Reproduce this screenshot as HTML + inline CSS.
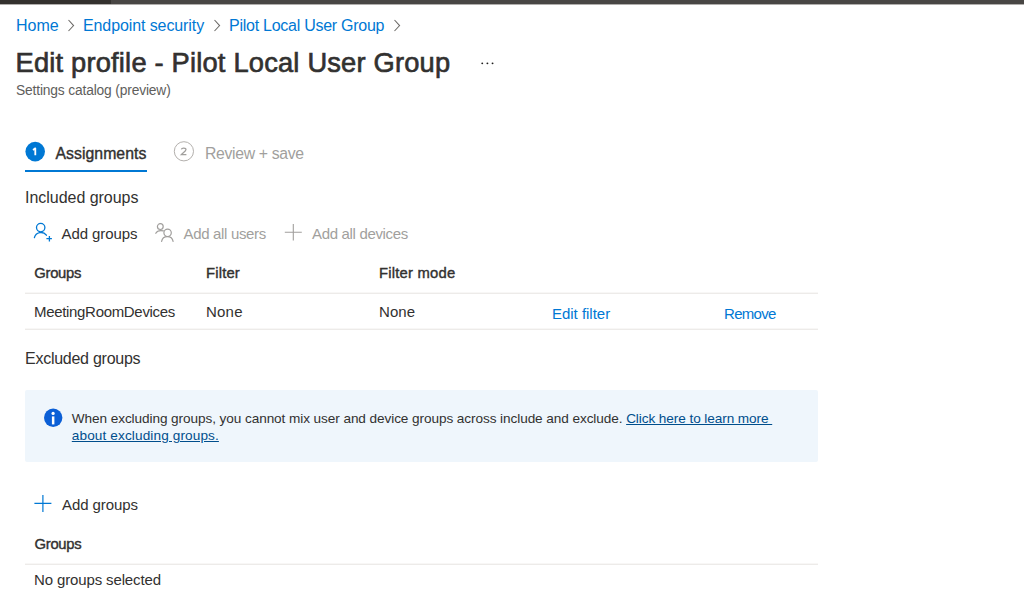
<!DOCTYPE html>
<html><head><meta charset="utf-8">
<style>
*{margin:0;padding:0;box-sizing:border-box}
html,body{width:1024px;height:596px;overflow:hidden;background:#fff}
body{position:relative;font-family:"Liberation Sans",sans-serif;color:#323130}
.a{position:absolute;white-space:nowrap}
.line{position:absolute;height:2px;border-top:1px solid #f8f7f6;background:#edebe9;left:25px;width:793px}
.il{color:#004e8c;text-decoration:underline;-webkit-text-stroke:0}
</style></head><body>
<div class="a" style="left:0;top:0;width:1024px;height:4px;background:#484644"></div>
<div class="a" style="left:0;top:0;width:111px;height:4px;background:#33312e"></div>
<div class="a" style="left:0;top:4px;width:1024px;height:1px;background:#b0aeac"></div>
<svg class="a" style="left:67px;top:18px" width="8" height="15" viewBox="0 0 8 15"><path d="M1.5 2 L6.6 7.6 L1.5 13" fill="none" stroke="#6b6966" stroke-width="1.05"/></svg>
<svg class="a" style="left:213px;top:18px" width="8" height="15" viewBox="0 0 8 15"><path d="M1.5 2 L6.6 7.6 L1.5 13" fill="none" stroke="#6b6966" stroke-width="1.05"/></svg>
<svg class="a" style="left:393px;top:18px" width="8" height="15" viewBox="0 0 8 15"><path d="M1.5 2 L6.6 7.6 L1.5 13" fill="none" stroke="#6b6966" stroke-width="1.05"/></svg>
<svg class="a" style="left:478px;top:60px" width="18" height="6" viewBox="0 0 18 6"><circle cx="4.25" cy="3.35" r="0.95" fill="#201f1e"/><circle cx="9.4" cy="3.35" r="0.95" fill="#201f1e"/><circle cx="14.55" cy="3.35" r="0.95" fill="#201f1e"/></svg>
<svg class="a" style="left:25px;top:141px" width="21" height="21" viewBox="0 0 21 21"><circle cx="10.2" cy="10.6" r="9.8" fill="#0078d4"/><path d="M10.3 14.3 V7.3 L8 8.9" fill="none" stroke="#fff" stroke-width="1.8" stroke-linejoin="round"/></svg>
<div class="a" style="left:25px;top:170px;width:122px;height:2px;background:#0078d4"></div>
<svg class="a" style="left:173px;top:141px" width="22" height="22" viewBox="0 0 22 22"><circle cx="10.9" cy="10.3" r="9.6" fill="none" stroke="#b3b0ad" stroke-width="1"/><path d="M8.4 8.4 C8.6 6.6 13 6.6 13 8.6 C13 10.2 10.5 11.5 8.3 13.6 H13.4" fill="none" stroke="#a19f9d" stroke-width="1.25"/></svg>
<svg class="a" style="left:30px;top:220px" width="24" height="24" viewBox="0 0 24 24"><circle cx="10.7" cy="7.6" r="4.2" fill="none" stroke="#0078d4" stroke-width="1.3"/><path d="M4.4 17.6 A6.8 6.8 0 0 1 16.4 15.2" fill="none" stroke="#0078d4" stroke-width="1.3" stroke-linecap="round"/><path d="M16.4 18.6 H21.9 M19.4 16.1 V21.6" fill="none" stroke="#0078d4" stroke-width="1.3"/></svg>
<svg class="a" style="left:150px;top:220px" width="26" height="24" viewBox="0 0 26 24"><circle cx="10.3" cy="6.6" r="2.9" fill="none" stroke="#a19f9d" stroke-width="1.2"/><path d="M5.8 13.3 Q7.6 9.8 13.4 10.9" fill="none" stroke="#a19f9d" stroke-width="1.2" stroke-linecap="round"/><circle cx="17.6" cy="12.8" r="3.7" fill="none" stroke="#a19f9d" stroke-width="1.2"/><path d="M11.6 21.4 A5.84 5.84 0 0 1 23.1 21.4" fill="none" stroke="#a19f9d" stroke-width="1.2" stroke-linecap="round"/></svg>
<svg class="a" style="left:284px;top:223px" width="19" height="19" viewBox="0 0 19 19"><path d="M0.8 9.2 H17.8 M9.3 1.1 V17.6" fill="none" stroke="#a19f9d" stroke-width="1.1"/></svg>
<div class="line" style="top:292px"></div>
<div class="line" style="top:328px"></div>
<div class="a" style="left:25px;top:390px;width:793px;height:72px;background:#eff6fc;border-radius:2px"></div>
<svg class="a" style="left:43px;top:408px" width="20" height="20" viewBox="0 0 20 20"><circle cx="10.2" cy="9.7" r="9.2" fill="#0b5fd6"/><circle cx="10.1" cy="5.4" r="1.6" fill="#fff"/><rect x="8.9" y="8.4" width="2.5" height="8" fill="#fff"/></svg>
<svg class="a" style="left:34px;top:495px" width="18" height="18" viewBox="0 0 18 18"><path d="M0.4 8.4 H17.4 M8.9 0 V17" fill="none" stroke="#0078d4" stroke-width="1.2"/></svg>
<div class="line" style="top:563px"></div>

<div class="a" style="left:16px;top:17.86px;font-size:16px;line-height:16px;color:#0078d4;">Home</div><div class="a" style="left:83px;top:17.86px;font-size:16px;line-height:16px;letter-spacing:-0.1px;color:#0078d4;">Endpoint security</div><div class="a" style="left:229px;top:17.86px;font-size:16px;line-height:16px;letter-spacing:-0.26px;color:#0078d4;">Pilot Local User Group</div><div class="a" style="left:15.5px;top:49.49px;font-size:27.3px;line-height:27.3px;letter-spacing:0.19px;-webkit-text-stroke:0.65px #323130;color:#323130;">Edit profile - Pilot Local User Group</div><div class="a" style="left:16px;top:84.47px;font-size:13.8px;line-height:13.8px;letter-spacing:-0.16px;color:#605e5c;">Settings catalog (preview)</div><div class="a" style="left:55.5px;top:145.78px;font-size:15.8px;line-height:15.8px;letter-spacing:0.04px;-webkit-text-stroke:0.4px #323130;color:#323130;">Assignments</div><div class="a" style="left:205px;top:145.78px;font-size:15.8px;line-height:15.8px;letter-spacing:-0.35px;color:#a19f9d;">Review + save</div><div class="a" style="left:25px;top:190.31px;font-size:16px;line-height:16px;letter-spacing:-0.03px;color:#323130;">Included groups</div><div class="a" style="left:61.5px;top:225.80px;font-size:15px;line-height:15px;letter-spacing:-0.08px;color:#323130;">Add groups</div><div class="a" style="left:183.5px;top:225.80px;font-size:15px;line-height:15px;letter-spacing:-0.33px;color:#a19f9d;">Add all users</div><div class="a" style="left:312px;top:225.80px;font-size:15px;line-height:15px;letter-spacing:-0.33px;color:#a19f9d;">Add all devices</div><div class="a" style="left:34.3px;top:266.37px;font-size:14.8px;line-height:14.8px;letter-spacing:-0.28px;-webkit-text-stroke:0.4px #323130;color:#323130;">Groups</div><div class="a" style="left:206px;top:266.37px;font-size:14.8px;line-height:14.8px;letter-spacing:0.18px;-webkit-text-stroke:0.4px #323130;color:#323130;">Filter</div><div class="a" style="left:379px;top:266.37px;font-size:14.8px;line-height:14.8px;letter-spacing:0.22px;-webkit-text-stroke:0.4px #323130;color:#323130;">Filter mode</div><div class="a" style="left:34px;top:304.10px;font-size:15px;line-height:15px;letter-spacing:-0.32px;color:#323130;">MeetingRoomDevices</div><div class="a" style="left:206px;top:304.20px;font-size:15px;line-height:15px;letter-spacing:0.22px;color:#323130;">None</div><div class="a" style="left:379px;top:304.20px;font-size:15px;line-height:15px;letter-spacing:0.1px;color:#323130;">None</div><div class="a" style="left:552px;top:305.75px;font-size:15px;line-height:15px;letter-spacing:-0.02px;color:#0078d4;">Edit filter</div><div class="a" style="left:724px;top:305.75px;font-size:15px;line-height:15px;letter-spacing:-0.7px;color:#0078d4;">Remove</div><div class="a" style="left:25px;top:351.06px;font-size:16px;line-height:16px;letter-spacing:-0.26px;color:#323130;">Excluded groups</div><div class="a" style="left:71.8px;top:411.79px;font-size:13.6px;line-height:13.6px;letter-spacing:-0.08px;color:#323130;">When excluding groups, you cannot mix user and device groups across include and exclude. <span class="il">Click here to learn more&nbsp;</span></div><div class="a" style="left:71.8px;top:429.39px;font-size:13.6px;line-height:13.6px;letter-spacing:0.12px;color:#323130;"><span class="il">about excluding groups.</span></div><div class="a" style="left:62px;top:497.15px;font-size:15px;line-height:15px;letter-spacing:-0.08px;color:#323130;">Add groups</div><div class="a" style="left:34.5px;top:536.97px;font-size:14.8px;line-height:14.8px;letter-spacing:-0.28px;-webkit-text-stroke:0.4px #323130;color:#323130;">Groups</div><div class="a" style="left:34px;top:571.95px;font-size:15px;line-height:15px;letter-spacing:-0.13px;color:#323130;">No groups selected</div>
</body></html>
